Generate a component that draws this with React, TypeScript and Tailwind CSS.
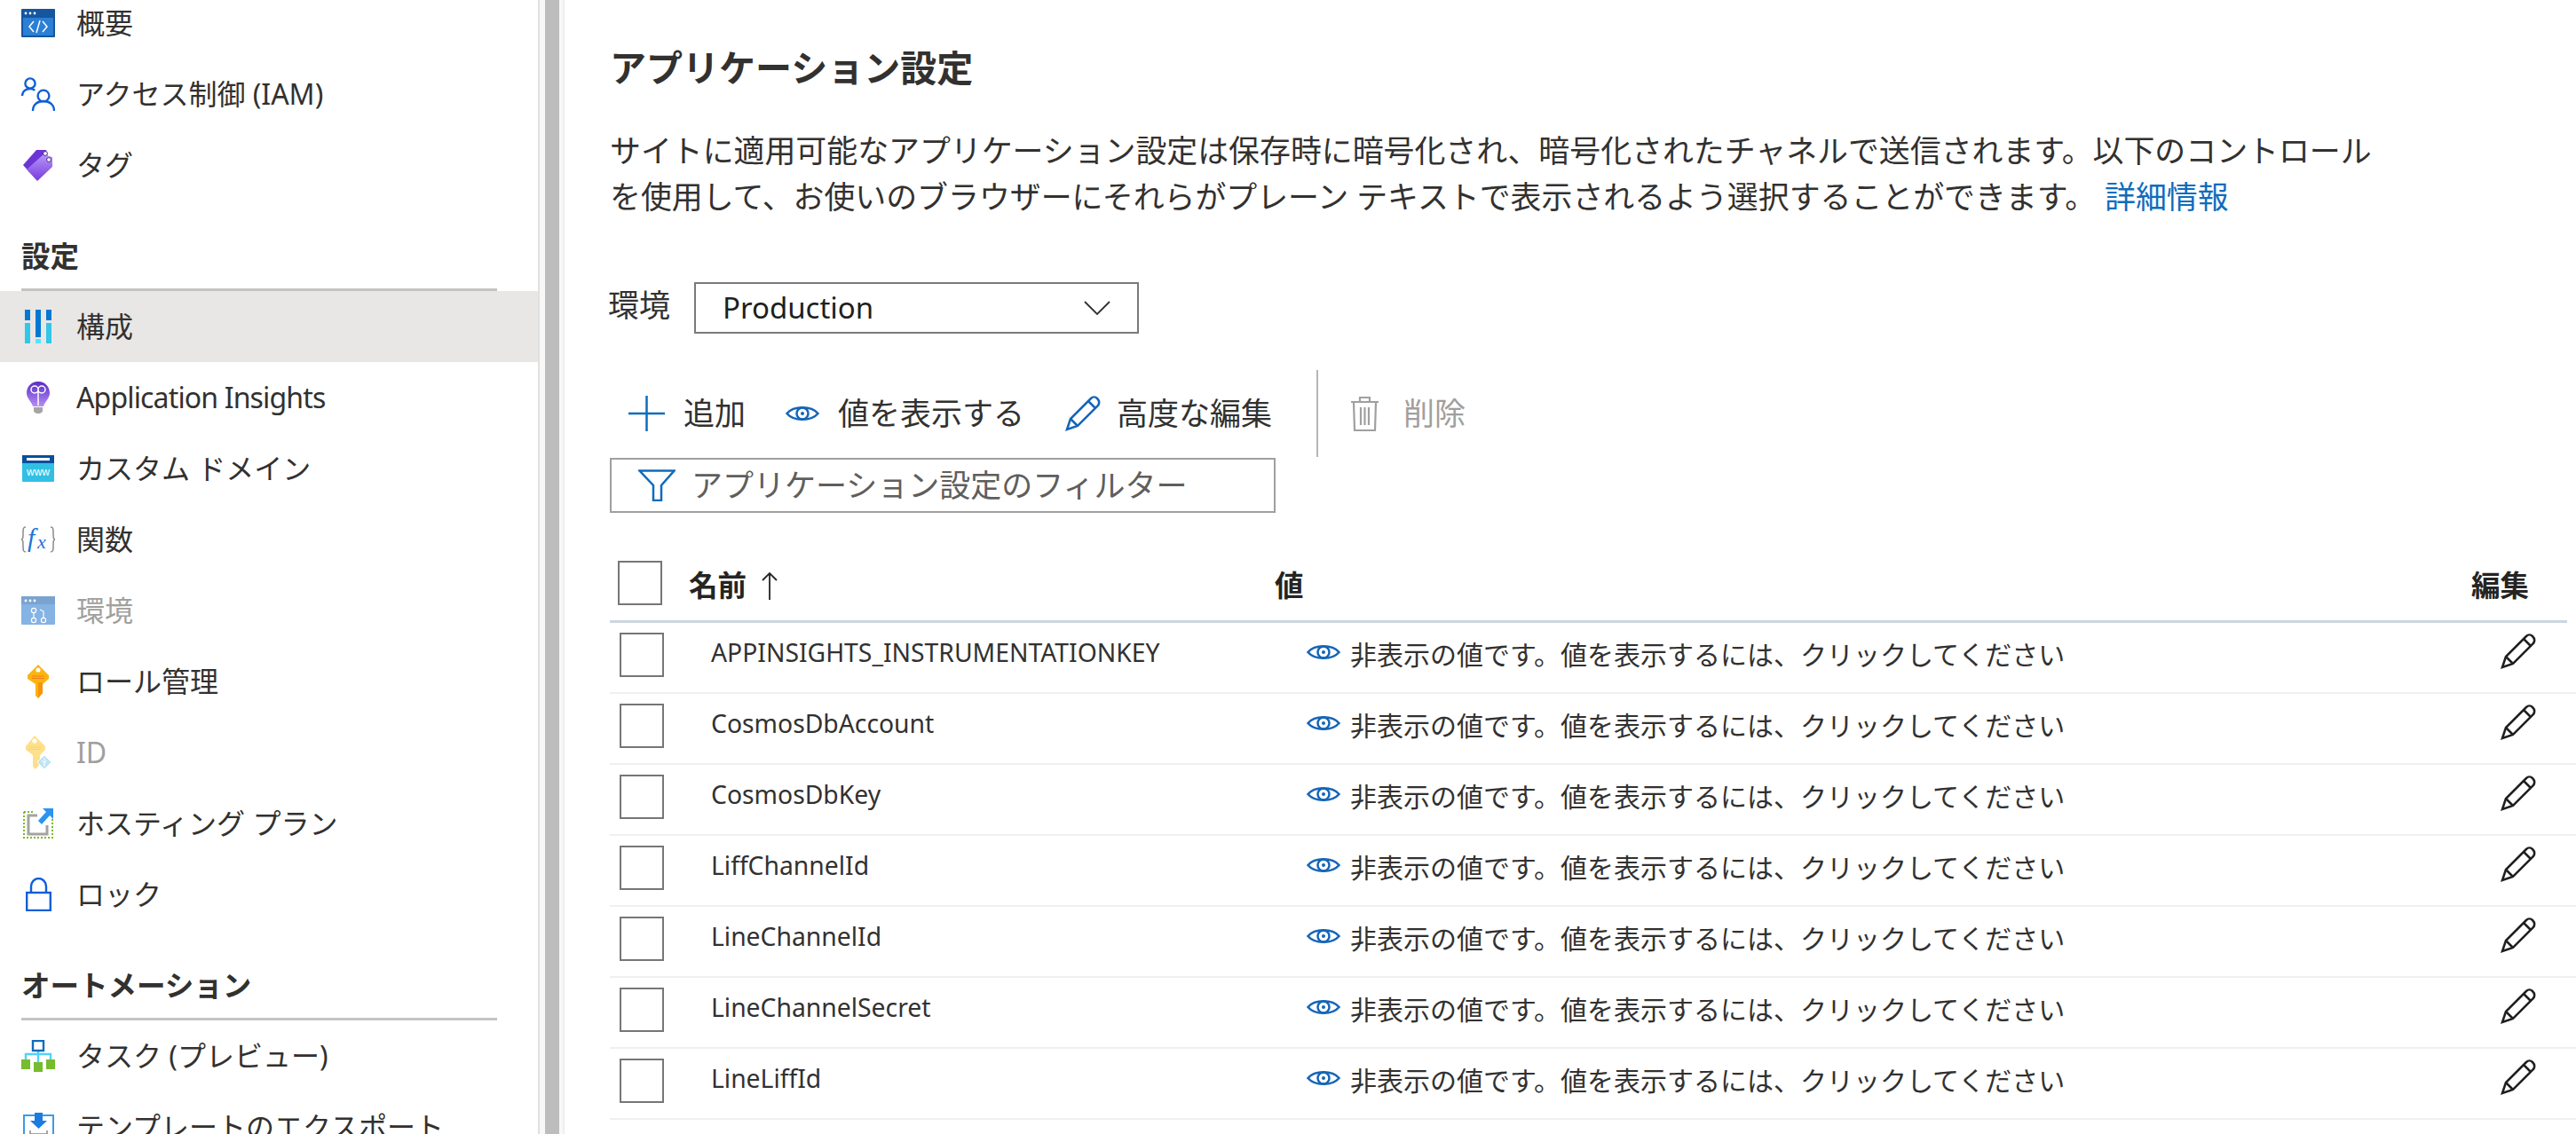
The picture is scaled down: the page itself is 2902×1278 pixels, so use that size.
import type { ReactNode } from "react";

const LATIN_CJK = "font-['Noto_Sans','Noto_Sans_CJK_JP',sans-serif]";

// --- sidebar icons ---
function OverviewIcon() {
  return (
    <svg width="38" height="32" viewBox="0 0 38 32">
      <rect width="38" height="32" rx="1" fill="#15569f" />
      <rect x="2" y="10" width="34" height="20" fill="#2b7fd4" />
      <circle cx="5" cy="5" r="1.4" fill="#fff" />
      <circle cx="10" cy="5" r="1.4" fill="#fff" />
      <circle cx="15" cy="5" r="1.4" fill="#fff" />
      <path d="M14 14l-5 6 5 6M24 14l5 6-5 6M21 13l-4 14" fill="none" stroke="#fff" strokeWidth="1.5" />
    </svg>
  );
}

function PeopleIcon() {
  return (
    <svg width="38" height="38" viewBox="0 0 38 38" fill="none" stroke="#0f5fd6" strokeWidth="2.4">
      <circle cx="10" cy="7" r="5.6" />
      <path d="M1 21c0-5 4-8 9-8 2 0 4 .5 5 2" />
      <circle cx="25" cy="21" r="6.4" />
      <path d="M13 38c0-7 5-11 12-11s12 4 12 11" />
    </svg>
  );
}

function TagIcon() {
  return (
    <svg width="34" height="36" viewBox="0 0 34 36">
      <defs>
        <linearGradient id="tagFill" x1="0" y1="0" x2="0" y2="1">
          <stop offset="0" stopColor="#b796f9" />
          <stop offset="1" stopColor="#773adc" />
        </linearGradient>
      </defs>
      <path d="M0 18L15 1l11 0 2 8L8 27z" fill="#6b35d6" />
      <path d="M4 23L23 6l10 3 0 11L16 36z" fill="url(#tagFill)" />
      <circle cx="25" cy="5" r="2.4" fill="#fff" stroke="#4b2a8c" strokeWidth="1" />
      <circle cx="29" cy="12" r="2.4" fill="#fff" stroke="#4b2a8c" strokeWidth="1" />
    </svg>
  );
}

function ConfigIcon() {
  return (
    <svg width="30" height="38" viewBox="0 0 30 38">
      <rect x="0" width="6" height="12" fill="#0078d4" />
      <rect x="0" y="15" width="6" height="23" fill="#32c6e8" />
      <rect x="12" width="6" height="31" fill="#0078d4" />
      <rect x="12" y="33" width="6" height="5" fill="#50e6ff" />
      <rect x="24" width="6" height="12" fill="#0078d4" />
      <rect x="24" y="15" width="6" height="23" fill="#32c6e8" />
    </svg>
  );
}

function BulbIcon() {
  return (
    <svg width="26" height="36" viewBox="0 0 26 36">
      <defs>
        <linearGradient id="bulbFill" x1="0" y1="0" x2="0" y2="1">
          <stop offset="0" stopColor="#5c2bc6" />
          <stop offset="1" stopColor="#b48ef5" />
        </linearGradient>
      </defs>
      <path d="M13 0C5 0 0 6 0 13c0 6 6 10 7 15h12c1-5 7-9 7-15C26 6 21 0 13 0z" fill="url(#bulbFill)" />
      <path d="M8 29h10v5l-3 2h-4l-3-2z" fill="#a5a5a5" />
      <path d="M13 27V9M5 9a3 3 0 0 0 8 0 3 3 0 0 0-8 0zM13 9a3 3 0 0 0 8 0 3 3 0 0 0-8 0z" fill="none" stroke="#fff" strokeWidth="1.5" />
    </svg>
  );
}

function WwwIcon() {
  return (
    <svg width="36" height="30" viewBox="0 0 36 30">
      <rect width="36" height="30" rx="1" fill="#32bfe4" />
      <rect width="36" height="9" fill="#0a4f9c" />
      <rect x="5" y="3" width="26" height="3" fill="#fff" />
      <text x="18" y="23" textAnchor="middle" fontSize="12" fontFamily="Liberation Sans, sans-serif" fill="#fff">
        www
      </text>
    </svg>
  );
}

function FxIcon() {
  return (
    <svg width="38" height="30" viewBox="0 0 38 30">
      <path d="M5 1C2 1 2 3 2 8c0 5 0 6-2 7 2 1 2 2 2 7 0 5 0 7 3 7M33 1c3 0 3 2 3 7 0 5 0 6 2 7-2 1-2 2-2 7 0 5 0 7-3 7" fill="none" stroke="#8a8a8a" strokeWidth="1.5" />
      <text x="7" y="23" fontSize="30" fontStyle="italic" fontFamily="Liberation Serif, serif" fill="#1b74d6">
        f
      </text>
      <text x="18" y="25" fontSize="22" fontStyle="italic" fontFamily="Liberation Serif, serif" fill="#1b74d6">
        x
      </text>
    </svg>
  );
}

function EnvIcon() {
  return (
    <svg width="38" height="32" viewBox="0 0 38 32">
      <rect width="38" height="32" rx="1" fill="#85b3e3" />
      <rect width="38" height="9" fill="#7ba3cf" />
      <circle cx="5" cy="5" r="1.4" fill="#fff" />
      <circle cx="10" cy="5" r="1.4" fill="#fff" />
      <circle cx="15" cy="5" r="1.4" fill="#fff" />
      <g fill="none" stroke="#fff" strokeWidth="1.2">
        <circle cx="14" cy="16" r="2.6" />
        <circle cx="14" cy="27" r="2.6" />
        <circle cx="25" cy="27" r="2.6" />
        <path d="M14 19v5M25 24v-7l-4-2" />
      </g>
    </svg>
  );
}

function KeyIcon() {
  return (
    <svg width="24" height="38" viewBox="0 0 24 38">
      <path d="M12 0L24 12v4l-7 6v10l-5 6-3-3V22L0 16v-4z" fill="#fbb40f" />
      <path d="M12 20h5v12l-5 6z" fill="#f9930b" />
      <circle cx="12" cy="6" r="2.6" fill="#fff" />
      <path d="M5 13h14M5 15.5h14" stroke="#f47b16" strokeWidth="1" />
    </svg>
  );
}

function IdentityIcon() {
  return (
    <svg width="29" height="38" viewBox="0 0 29 38">
      <path d="M10 0L22 12v4l-6 6v10l-5 6-3-3V22L0 16v-4z" fill="#fde08c" />
      <circle cx="10" cy="6" r="2.6" fill="#fff" />
      <path d="M3 13h14M3 15.5h14" stroke="#fbd070" strokeWidth="1" />
      <path d="M21 22l8 8-8 8-8-8z" fill="#bde3f5" stroke="#fff" strokeWidth="1" />
      <path d="M21 25v10M18 28l3 3 3-3" fill="none" stroke="#fff" strokeWidth="1" />
    </svg>
  );
}

function HostingIcon() {
  return (
    <svg width="34" height="34" viewBox="0 0 34 34">
      <path d="M1 4v29h32V5M1 4h10" fill="none" stroke="#7fba22" strokeWidth="2" strokeDasharray="2 2" />
      <path d="M16 8H6v21h21V19" fill="none" stroke="#a3a3a3" strokeWidth="3" />
      <path d="M22 0h12v12l-4-4-9 10-4-4 9-10z" fill="#2b93f0" />
    </svg>
  );
}

function LockIcon() {
  return (
    <svg width="29" height="38" viewBox="0 0 29 38" fill="none" stroke="#0f5fd6" strokeWidth="2.4">
      <rect x="1.2" y="17" width="26.6" height="20" />
      <path d="M6 17V10c0-5 4-9 8.5-9S23 5 23 10v7" />
    </svg>
  );
}

function TaskIcon() {
  return (
    <svg width="38" height="36" viewBox="0 0 38 36">
      <path d="M19 10v20M5 22v-6h28v6" fill="none" stroke="#50d4f5" strokeWidth="2.4" />
      <rect x="13" y="1" width="12" height="11" fill="#fff" stroke="#0f6cbd" strokeWidth="2.4" />
      <rect x="0" y="22" width="10" height="11" fill="#76bc2d" />
      <rect x="14" y="25" width="10" height="11" fill="#76bc2d" />
      <rect x="28" y="22" width="10" height="11" fill="#76bc2d" />
    </svg>
  );
}

function TemplateIcon() {
  return (
    <svg width="35" height="32" viewBox="0 0 35 32">
      <rect x="1" y="3" width="33" height="28" fill="none" stroke="#3b9be8" strokeWidth="2" />
      <path d="M13 0h9v9h5l-9.5 9L8 9h5z" fill="#1b7ce0" />
      <path d="M8 20v4h19v-4" fill="none" stroke="#8a8a8a" strokeWidth="1.5" />
    </svg>
  );
}

// --- content icons ---
function EyeIcon() {
  return (
    <svg width="38" height="20" viewBox="0 0 38 20" fill="none" stroke="#1565b8" strokeWidth="2.5" className="shrink-0">
      <path d="M1.5 10C9 1 29 1 36.5 10 29 19 9 19 1.5 10z" />
      <circle cx="19" cy="10" r="6.5" />
      <circle cx="19" cy="10" r="2" fill="#1565b8" stroke="none" />
    </svg>
  );
}

function PencilIcon({ color }: { color: string }) {
  return (
    <svg width="40" height="40" viewBox="0 0 40 40" fill="none" stroke={color} strokeWidth="2.5" className="shrink-0">
      <path d="M2 38l4-12L29 3c2-2 5-2 7 0s3 5 1 8L14 34z" />
      <path d="M6 26l8 8M26 6l8 8" />
    </svg>
  );
}

function Checkbox() {
  return <div className="w-[50px] h-[50px] border-2 border-[#767676] bg-white shrink-0" />;
}

// --- sidebar ---
function NavItem({
  icon,
  label,
  active,
  muted,
  latin,
}: {
  icon: ReactNode;
  label: string;
  active?: boolean;
  muted?: boolean;
  latin?: boolean;
}) {
  return (
    <div
      className={`flex items-center h-[80px] ${active ? "bg-[#e8e7e6]" : ""} ${
        muted ? "text-[#a19f9d]" : "text-[#323130]"
      }`}
    >
      <div className="w-[86px] pl-[24px] shrink-0">
        <div className="w-[38px] flex justify-center">{icon}</div>
      </div>
      <span className={`text-[32px] leading-[40px] whitespace-nowrap ${latin ? "tracking-[-0.85px]" : ""}`}>
        {label}
      </span>
    </div>
  );
}

function NavSection({ title, children }: { title: string; children: ReactNode }) {
  return (
    <div>
      <div className="pt-[45px] pl-[24px] pr-[46px]">
        <h3 className="text-[32.5px] leading-[36px] font-bold text-[#323130]">{title}</h3>
        <div className="mt-[18px] h-[3px] bg-[#c4c4c4]" />
      </div>
      {children}
    </div>
  );
}

function Sidebar() {
  return (
    <aside className="w-[606px] shrink-0 -mt-[14px]">
      <NavItem icon={<OverviewIcon />} label="概要" />
      <NavItem icon={<PeopleIcon />} label="アクセス制御 (IAM)" />
      <NavItem icon={<TagIcon />} label="タグ" />
      <NavSection title="設定">
        <NavItem icon={<ConfigIcon />} label="構成" active />
        <NavItem icon={<BulbIcon />} label="Application Insights" latin />
        <NavItem icon={<WwwIcon />} label="カスタム ドメイン" />
        <NavItem icon={<FxIcon />} label="関数" />
        <NavItem icon={<EnvIcon />} label="環境" muted />
        <NavItem icon={<KeyIcon />} label="ロール管理" />
        <NavItem icon={<IdentityIcon />} label="ID" muted />
        <NavItem icon={<HostingIcon />} label="ホスティング プラン" />
        <NavItem icon={<LockIcon />} label="ロック" />
      </NavSection>
      <NavSection title="オートメーション">
        <NavItem icon={<TaskIcon />} label="タスク (プレビュー)" />
        <NavItem icon={<TemplateIcon />} label="テンプレートのエクスポート" />
      </NavSection>
    </aside>
  );
}

// --- table ---
const settings = [
  "APPINSIGHTS_INSTRUMENTATIONKEY",
  "CosmosDbAccount",
  "CosmosDbKey",
  "LiffChannelId",
  "LineChannelId",
  "LineChannelSecret",
  "LineLiffId",
];

function SettingRow({ name }: { name: string }) {
  return (
    <div className="grid grid-cols-[115px_670px_1fr_85px] items-center h-[80px] border-b-2 border-[#f0f0f0] pb-[6px]">
      <div className="pl-[11px]">
        <Checkbox />
      </div>
      <span className="text-[28.3px] leading-[36px] text-[#323130] pb-[6px] -ml-[1px]">{name}</span>
      <div className="flex items-center gap-[11px] text-[#323130]">
        <div className="pb-[6px]">
          <EyeIcon />
        </div>
        <span className="text-[30px] leading-[36px] whitespace-nowrap">
          非表示の値です。値を表示するには、クリックしてください
        </span>
      </div>
      <div className="pb-[8px]">
        <PencilIcon color="#201f1e" />
      </div>
    </div>
  );
}

export default function App() {
  return (
    <div className={`flex w-[2902px] h-[1278px] overflow-hidden bg-white ${LATIN_CJK}`}>
      <Sidebar />
      <div className="w-[2px] shrink-0 bg-[#e0e0e0]" />
      <div className="w-[6px] shrink-0 bg-[#f8f8f8]" />
      <div className="w-[16px] shrink-0 bg-[#bdbdbd]" />
      <div className="w-[4px] shrink-0 bg-[#f8f8f8]" />
      <div className="w-[2px] shrink-0 bg-[#eeeeee]" />

      <main className="flex-1 pl-[51px] min-w-0">
        <h2 className="mt-[52px] text-[41px] leading-[48px] font-bold text-[#323130]">アプリケーション設定</h2>
        <p className="mt-[44px] text-[34.9px] leading-[52px] text-[#323130] whitespace-nowrap">
          サイトに適用可能なアプリケーション設定は保存時に暗号化され、暗号化されたチャネルで送信されます。以下のコントロール
          <br />
          を使用して、お使いのブラウザーにそれらがプレーン テキストで表示されるよう選択することができます。
          <span className="ml-[10px] text-[#0f6cbd]">詳細情報</span>
        </p>

        <div className="mt-[70px] flex items-center h-[58px]">
          <span className="text-[35px] text-[#323130] w-[95px] pb-[6px] -ml-[2px] mr-[2px]">環境</span>
          <div className="flex items-center justify-between w-[501px] h-[58px] border-2 border-[#7a7a7a] pl-[30px] pr-[30px]">
            <span className="text-[33px] text-[#201f1e]">Production</span>
            <svg width="30" height="16" viewBox="0 0 30 16" fill="none" stroke="#323130" strokeWidth="1.8">
              <path d="M1 1l14 14L29 1" />
            </svg>
          </div>
        </div>

        <div className="mt-[41px] flex items-center h-[98px] text-[35px] text-[#323130]">
          <div className="flex items-center pl-[21px]">
            <svg width="41" height="40" viewBox="0 0 41 40" stroke="#0f6cbd" strokeWidth="2.5">
              <path d="M20.5 0v40M0 20h41" />
            </svg>
            <span className="ml-[21px]">追加</span>
          </div>
          <div className="flex items-center ml-[45px]">
            <EyeIcon />
            <span className="ml-[21px]">値を表示する</span>
          </div>
          <div className="flex items-center ml-[46px]">
            <PencilIcon color="#1565b8" />
            <span className="ml-[18px]">高度な編集</span>
          </div>
          <div className="w-[2px] h-[98px] bg-[#b5b5b5] ml-[50px]" />
          <div className="flex items-center ml-[36px] text-[#a19f9d]">
            <svg width="33" height="40" viewBox="0 0 33 40" fill="none" stroke="#a0a0a0" strokeWidth="2.2">
              <path d="M1 7h31M11 7V2h11v5M4 7l1 32h23l1-32M12 13v20M16.5 13v20M21 13v20" />
            </svg>
            <span className="ml-[27px]">削除</span>
          </div>
        </div>

        <div className="mt-[1px] flex items-center w-[750px] h-[62px] border-2 border-[#a0a0a0] pl-[30px]">
          <svg width="42" height="36" viewBox="0 0 42 36" fill="none" stroke="#0f6cbd" strokeWidth="2.5">
            <path d="M1.5 1.5h39L26 18v17h-9V18z" />
          </svg>
          <span className="ml-[18px] text-[35px] leading-[40px] text-[#605e5c]">アプリケーション設定のフィルター</span>
        </div>

        <div className="mt-[54px] grid grid-cols-[89px_660px_1fr_115px] items-start h-[70px] w-[2205px] border-b-[3px] border-[#cdd5df]">
          <div className="pl-[9px]">
            <Checkbox />
          </div>
          <div className="flex items-center gap-[16px] h-[50px] pt-[6px] text-[32.5px] font-bold text-[#252423]">
            <span>名前</span>
            <svg width="20" height="32" viewBox="0 0 20 32" fill="none" stroke="#252423" strokeWidth="1.8">
              <path d="M10 32V2M2 10l8-8 8 8" />
            </svg>
          </div>
          <div className="flex items-center h-[50px] pt-[6px] text-[32.5px] font-bold text-[#252423]">値</div>
          <div className="flex items-center justify-end pr-[43px] h-[50px] pt-[6px] text-[32.5px] font-bold text-[#252423] whitespace-nowrap">
            編集
          </div>
        </div>

        {settings.map((name) => (
          <SettingRow key={name} name={name} />
        ))}
      </main>
    </div>
  );
}
